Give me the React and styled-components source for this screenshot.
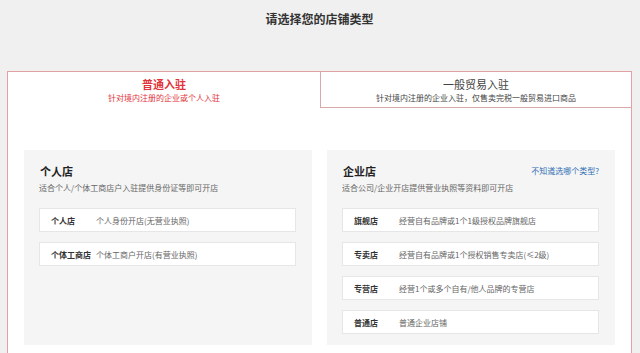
import React from "react";
import styled, { createGlobalStyle } from "styled-components";

const Global = createGlobalStyle`
  html, body { margin: 0; padding: 0; background: #f0f0f0; }
  body { font-family: "Noto Sans CJK SC", "Noto Sans", sans-serif; color: #333; }
  * { box-sizing: border-box; }
`;

const Page = styled.div`
  width: 640px;
  padding: 9px 8px 0 7px;
`;

const Heading = styled.h1`
  margin: 0;
  font-size: 12px;
  line-height: 20px;
  font-weight: 700;
  text-align: center;
  color: #333;
`;

const Panel = styled.div`
  margin-top: 42px;
  width: 625px;
  border: 1px solid #e3a2a2;
  border-bottom: none;
  background: #fff;
`;

const Tabs = styled.div`
  display: grid;
  grid-template-columns: 312px 1fr;
`;

const Tab = styled.div`
  height: 36px;
  display: flex;
  flex-direction: column;
  align-items: center;
  justify-content: center;
  background: #fff;
  color: ${(p) => (p.$active ? "#e2333a" : "#444")};
  border-left: ${(p) => (p.$active ? "none" : "1px solid #d9a9a9")};
  border-bottom: ${(p) => (p.$active ? "none" : "1px solid #d9a9a9")};
`;

const TabTitle = styled.div`
  font-size: 11px;
  line-height: 14px;
  font-weight: ${(p) => (p.$active ? 700 : 400)};
`;

const TabSub = styled.div`
  font-size: 8px;
  line-height: 11px;
  margin-top: 1px;
`;

const Content = styled.div`
  display: grid;
  grid-template-columns: 1fr 1fr;
  gap: 15px;
  padding: 42px 16px 9px 16px;
`;

const Card = styled.div`
  background: #f5f5f5;
  padding: 14px 16px 11px 15px;
`;

const CardHead = styled.div`
  display: flex;
  justify-content: space-between;
  align-items: center;
  padding-left: 1px;
`;

const CardTitle = styled.div`
  font-size: 11px;
  line-height: 14px;
  font-weight: 700;
  color: #222;
`;

const HelpLink = styled.a`
  font-size: 8px;
  line-height: 14px;
  color: #2f6db5;
  text-decoration: none;
`;

const CardSub = styled.div`
  margin-top: 4px;
  font-size: 8px;
  line-height: 12px;
  color: #666;
`;

const Rows = styled.div`
  margin-top: 14px;
  display: flex;
  flex-direction: column;
  gap: 10px;
`;

const Row = styled.div`
  height: 24px;
  display: flex;
  align-items: center;
  background: #fff;
  border: 1px solid #e6e6e6;
  padding-left: 11px;
  font-size: 8px;
`;

const RowLabel = styled.span`
  width: 45px;
  flex: none;
  font-weight: 700;
  color: #333;
`;

const RowDesc = styled.span`
  color: #666;
`;

const personal = [
  ["个人店", "个人身份开店(无营业执照)"],
  ["个体工商店", "个体工商户开店(有营业执照)"],
];

const enterprise = [
  ["旗舰店", "经营自有品牌或1个1级授权品牌旗舰店"],
  ["专卖店", "经营自有品牌或1个授权销售专卖店(≤2级)"],
  ["专营店", "经营1个或多个自有/他人品牌的专营店"],
  ["普通店", "普通企业店铺"],
];

function StoreCard({ title, sub, rows, link }) {
  return (
    <Card>
      <CardHead>
        <CardTitle>{title}</CardTitle>
        {link && <HelpLink href="#">{link}</HelpLink>}
      </CardHead>
      <CardSub>{sub}</CardSub>
      <Rows>
        {rows.map(([l, d]) => (
          <Row key={l}>
            <RowLabel>{l}</RowLabel>
            <RowDesc>{d}</RowDesc>
          </Row>
        ))}
      </Rows>
    </Card>
  );
}

export default function App() {
  return (
    <>
      <Global />
      <Page>
        <Heading>请选择您的店铺类型</Heading>
        <Panel>
          <Tabs>
            <Tab $active>
              <TabTitle $active>普通入驻</TabTitle>
              <TabSub>针对境内注册的企业或个人入驻</TabSub>
            </Tab>
            <Tab>
              <TabTitle>一般贸易入驻</TabTitle>
              <TabSub>针对境内注册的企业入驻，仅售卖完税一般贸易进口商品</TabSub>
            </Tab>
          </Tabs>
          <Content>
            <StoreCard
              title="个人店"
              sub="适合个人/个体工商店户入驻提供身份证等即可开店"
              rows={personal}
            />
            <StoreCard
              title="企业店"
              sub="适合公司/企业开店提供营业执照等资料即可开店"
              rows={enterprise}
              link="不知道选哪个类型?"
            />
          </Content>
        </Panel>
      </Page>
    </>
  );
}
